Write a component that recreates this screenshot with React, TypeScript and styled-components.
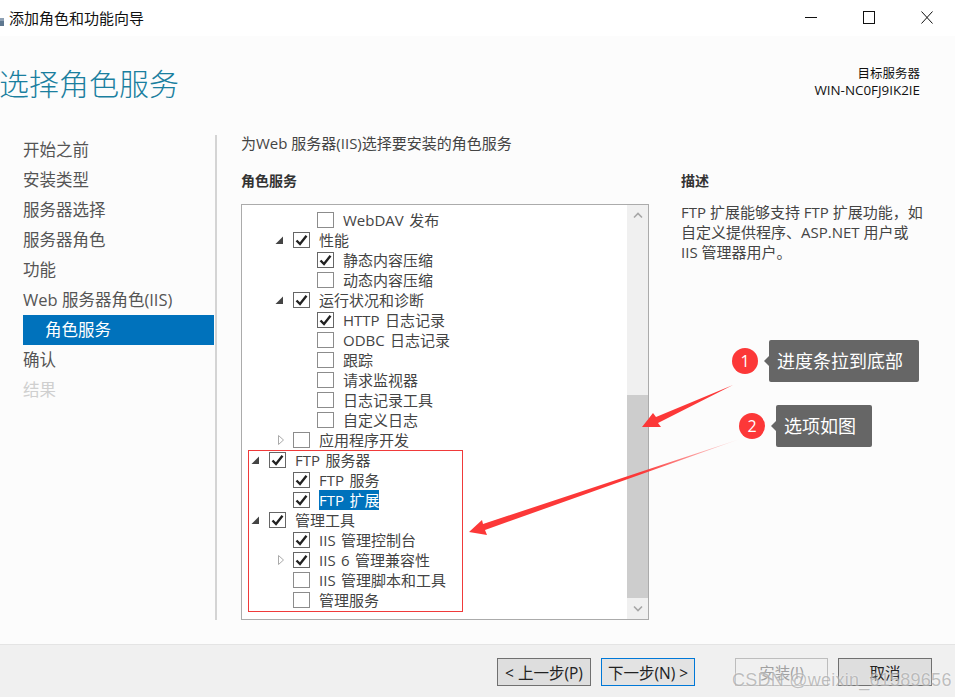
import React, { FC } from 'react'
import styled, { createGlobalStyle } from 'styled-components'

const GlobalStyle = createGlobalStyle`
    html, body {
        margin: 0;
        padding: 0;
        background: #fcfcfc;
    }
    * {
        box-sizing: border-box;
    }
`

const Window = styled.div`
    position: relative;
    width: 955px;
    height: 697px;
    overflow: hidden;
    display: flex;
    flex-direction: column;
    background: #fcfcfc;
    color: #333;
    font-family: 'Open Sans', 'Noto Sans CJK SC', sans-serif;
`

const TitleBar = styled.div`
    height: 36px;
    flex: none;
    background: #fff;
    display: flex;
    align-items: center;
    justify-content: space-between;
    padding: 0 22px 2px 0;
`

const TitleLeft = styled.div`
    display: flex;
    align-items: center;
    gap: 5px;
    font-size: 15px;
    color: #111;
`

const WindowButtons = styled.div`
    display: flex;
    align-items: center;
    gap: 46px;
    color: #111;
`

const Header = styled.div`
    height: 98px;
    flex: none;
    display: flex;
    justify-content: space-between;
    padding: 30px 35px 0 0;
`

const PageTitle = styled.h1`
    margin: 0 0 0 -1px;
    font-size: 30px;
    line-height: 36px;
    font-weight: 300;
    color: #1a7f9f;
`

const TargetServer = styled.div`
    text-align: right;
    font-size: 12.5px;
    line-height: 16px;
    color: #111;
`

const ServerName = styled.div`
    font-size: 13.4px;
`

const Main = styled.div`
    flex: 1;
    display: flex;
    min-height: 0;
`

const Sidebar = styled.nav`
    width: 217px;
    height: 485px;
    flex: none;
    margin-top: 1px;
    border-right: 2px solid #d4d4d4;
    padding-left: 23px;
`

const NavItem = styled.div<{ $state?: 'active' | 'disabled' }>`
    height: 30px;
    width: 191px;
    display: flex;
    align-items: center;
    padding-bottom: 2px;
    font-size: 16.5px;
    padding-left: ${p => (p.$state === 'active' ? '22px' : '0')};
    background: ${p => (p.$state === 'active' ? '#0072bc' : 'transparent')};
    color: ${p => (p.$state === 'active' ? '#fff' : p.$state === 'disabled' ? '#cfcfcf' : '#555')};
`

const Content = styled.section`
    width: 440px;
    flex: none;
    margin-left: 24px;
`

const Intro = styled.div`
    height: 18px;
    font-size: 15px;
    line-height: 18px;
    color: #444;
`

const SectionLabel = styled.div`
    margin-top: 20px;
    height: 18px;
    font-size: 14px;
    line-height: 18px;
    font-weight: 700;
    color: #333;
`

const ListBox = styled.div`
    position: relative;
    margin-top: 14px;
    width: 408px;
    height: 416px;
    display: flex;
    background: #fff;
    border: 1px solid #ababab;
`

const Tree = styled.div`
    flex: 1;
    padding-top: 5px;
`

const Row = styled.div<{ $level: number }>`
    height: 20px;
    display: flex;
    align-items: center;
    padding-left: ${p => 7 + p.$level * 24}px;
    font-size: 15px;
    word-spacing: 1.5px;
    color: #444;
`

const Expander = styled.span`
    width: 20px;
    padding-left: 1px;
    flex: none;
    display: flex;
    align-items: center;
`

const Box = styled.span<{ $strong: boolean }>`
    width: 17px;
    height: 16px;
    flex: none;
    display: flex;
    align-items: center;
    justify-content: center;
    border: 1px solid ${p => (p.$strong ? '#666' : '#8c8c8c')};
    background: #fff;
`

const RowLabel = styled.span<{ $selected?: boolean }>`
    margin-left: 9px;
    line-height: 20px;
    padding: 0;
    background: ${p => (p.$selected ? '#0072bc' : 'transparent')};
    color: ${p => (p.$selected ? '#fff' : '#444')};
`

const Scrollbar = styled.div`
    width: 21px;
    flex: none;
    display: flex;
    flex-direction: column;
    background: #f0f0f0;
`

const ScrollArrow = styled.div`
    height: 21px;
    flex: none;
    display: flex;
    align-items: center;
    justify-content: center;
`

const ScrollSpace = styled.div`
    height: 169px;
    flex: none;
`

const ScrollThumb = styled.div`
    flex: 1;
    background: #cdcdcd;
`

const Highlight = styled.div`
    position: absolute;
    left: 6px;
    top: 245px;
    width: 215px;
    height: 162px;
    border: 1px solid #f03a3a;
    pointer-events: none;
`

const Description = styled.aside`
    width: 250px;
    flex: none;
`

const DescriptionText = styled.p`
    margin: 12px 0 0;
    font-size: 15px;
    line-height: 20px;
    color: #444;
`

const Footer = styled.div`
    height: 53px;
    flex: none;
    background: #f0f0f0;
    border-top: 1px solid #e4e4e4;
    display: flex;
    align-items: flex-start;
    justify-content: flex-end;
    padding: 13px 23px 0 0;
`

const Button = styled.button<{ $kind?: 'primary' | 'disabled'; $gap?: number }>`
    width: ${p => (p.$kind === 'disabled' ? 93 : 94)}px;
    height: 28px;
    margin-left: ${p => p.$gap ?? 10}px;
    padding: 0;
    font-family: inherit;
    font-size: 15.5px;
    background: ${p => (p.$kind === 'disabled' ? '#f0f0f0' : p.$kind === 'primary' ? '#e3e3e3' : '#dedede')};
    border: 1px solid ${p => (p.$kind === 'primary' ? '#0078d7' : p.$kind === 'disabled' ? '#bdbdbd' : '#707070')};
    color: ${p => (p.$kind === 'disabled' ? '#a0a0a0' : '#222')};
`

const ArrowLayer = styled.svg`
    position: absolute;
    left: 0;
    top: 0;
    pointer-events: none;
`

const StepBadge = styled.div<{ $x: number; $y: number }>`
    position: absolute;
    left: ${p => p.$x - 13}px;
    top: ${p => p.$y - 13}px;
    width: 26px;
    height: 26px;
    border-radius: 50%;
    background: #fc3838;
    color: #fff;
    font-size: 16px;
    display: flex;
    align-items: center;
    justify-content: center;
`

const Callout = styled.div<{ $x: number; $y: number; $w: number }>`
    position: absolute;
    left: ${p => p.$x}px;
    top: ${p => p.$y}px;
    width: ${p => p.$w}px;
    height: 42px;
    border-radius: 2px;
    background: #666;
    color: #fff;
    font-size: 18px;
    line-height: 42px;
    padding-left: 8px;
    white-space: nowrap;

    &::before {
        content: '';
        position: absolute;
        left: -5px;
        top: 16px;
        border-style: solid;
        border-width: 5px 5px 5px 0;
        border-color: transparent #666 transparent transparent;
    }
`

const Watermark = styled.div`
    position: absolute;
    left: 732px;
    top: 669px;
    font-family: 'Liberation Sans', sans-serif;
    font-size: 18px;
    letter-spacing: 0.25px;
    line-height: 22px;
    white-space: nowrap;
    color: rgba(150, 150, 150, 0.6);
    text-shadow: 0 0 2px rgba(255, 255, 255, 0.9);
`

interface TreeRow {
    label: string
    level: number
    checked?: boolean
    expander?: 'open' | 'closed'
    selected?: boolean
}

const rows: TreeRow[] = [
    { label: 'WebDAV 发布', level: 2 },
    { label: '性能', level: 1, checked: true, expander: 'open' },
    { label: '静态内容压缩', level: 2, checked: true },
    { label: '动态内容压缩', level: 2 },
    { label: '运行状况和诊断', level: 1, checked: true, expander: 'open' },
    { label: 'HTTP 日志记录', level: 2, checked: true },
    { label: 'ODBC 日志记录', level: 2 },
    { label: '跟踪', level: 2 },
    { label: '请求监视器', level: 2 },
    { label: '日志记录工具', level: 2 },
    { label: '自定义日志', level: 2 },
    { label: '应用程序开发', level: 1, expander: 'closed' },
    { label: 'FTP 服务器', level: 0, checked: true, expander: 'open' },
    { label: 'FTP 服务', level: 1, checked: true },
    { label: 'FTP 扩展', level: 1, checked: true, selected: true },
    { label: '管理工具', level: 0, checked: true, expander: 'open' },
    { label: 'IIS 管理控制台', level: 1, checked: true },
    { label: 'IIS 6 管理兼容性', level: 1, checked: true, expander: 'closed' },
    { label: 'IIS 管理脚本和工具', level: 1 },
    { label: '管理服务', level: 1 },
]

const navItems: { label: string; state?: 'active' | 'disabled' }[] = [
    { label: '开始之前' },
    { label: '安装类型' },
    { label: '服务器选择' },
    { label: '服务器角色' },
    { label: '功能' },
    { label: 'Web 服务器角色(IIS)' },
    { label: '角色服务', state: 'active' },
    { label: '确认' },
    { label: '结果', state: 'disabled' },
]

const ExpanderIcon: FC<{ kind: 'open' | 'closed' }> = ({ kind }) =>
    kind === 'open' ? (
        <svg width="10" height="10" viewBox="0 0 10 10">
            <path d="M9 1.5V9H1.5z" fill="#444" />
        </svg>
    ) : (
        <svg width="10" height="12" viewBox="0 0 10 12" style={{ marginLeft: 3 }}>
            <path d="M1.5 1.5L6.5 6L1.5 10.5z" fill="#fff" stroke="#aaa" />
        </svg>
    )

const CheckMark = () => (
    <svg width="13" height="12" viewBox="0 0 13 12">
        <path d="M1.5 6.5L5 10L11.5 1.8" fill="none" stroke="#222" strokeWidth="2.4" />
    </svg>
)

const TreeItem: FC<{ row: TreeRow }> = ({ row }) => (
    <Row $level={row.level}>
        <Expander>{row.expander && <ExpanderIcon kind={row.expander} />}</Expander>
        <Box $strong={row.level === 0 || !!row.checked}>{row.checked && <CheckMark />}</Box>
        <RowLabel $selected={row.selected}>{row.label}</RowLabel>
    </Row>
)

const Chevron: FC<{ up?: boolean }> = ({ up }) => (
    <svg width="10" height="7" viewBox="0 0 10 7">
        <path d={up ? 'M1 5.5L5 1.5L9 5.5' : 'M1 1.5L5 5.5L9 1.5'} fill="none" stroke="#a6a6a6" strokeWidth="1.6" />
    </svg>
)

const AppIcon = () => (
    <svg width="4" height="8" viewBox="0 0 4 8" style={{ marginTop: 9 }}>
        <rect width="4" height="3" fill="#8da0b4" />
        <rect y="3" width="4" height="5" fill="#5f7890" />
    </svg>
)

const Arrows = () => (
    <ArrowLayer width="955" height="697" viewBox="0 0 955 697">
        <defs>
            <linearGradient id="fade" gradientUnits="userSpaceOnUse" x1="740" y1="439" x2="640" y2="472">
                <stop offset="0" stopColor="#fc3838" stopOpacity="0.1" />
                <stop offset="1" stopColor="#fc3838" />
            </linearGradient>
        </defs>
        <path d="M733 385L656 417L653 413L642 427L661 427L658 423z" fill="#fc3838" />
        <path d="M740 439L483 524L482 520L469 532L487 535L485 530z" fill="url(#fade)" />
    </ArrowLayer>
)

export default function App() {
    return (
        <Window>
            <GlobalStyle />
            <TitleBar>
                <TitleLeft>
                    <AppIcon />
                    添加角色和功能向导
                </TitleLeft>
                <WindowButtons>
                    <svg width="12" height="13" viewBox="0 0 12 13">
                        <path d="M0 6.5H12" stroke="currentColor" />
                    </svg>
                    <svg width="12" height="13" viewBox="0 0 12 13">
                        <rect x="0.5" y="0.5" width="11" height="12" fill="none" stroke="currentColor" />
                    </svg>
                    <svg width="12" height="13" viewBox="0 0 12 13">
                        <path d="M0.5 0.5L11.5 12.5M11.5 0.5L0.5 12.5" stroke="currentColor" />
                    </svg>
                </WindowButtons>
            </TitleBar>
            <Header>
                <PageTitle>选择角色服务</PageTitle>
                <TargetServer>
                    目标服务器
                    <ServerName>WIN-NC0FJ9IK2IE</ServerName>
                </TargetServer>
            </Header>
            <Main>
                <Sidebar>
                    {navItems.map(item => (
                        <NavItem key={item.label} $state={item.state}>
                            {item.label}
                        </NavItem>
                    ))}
                </Sidebar>
                <Content>
                    <Intro>为Web 服务器(IIS)选择要安装的角色服务</Intro>
                    <SectionLabel>角色服务</SectionLabel>
                    <ListBox>
                        <Tree>
                            {rows.map(row => (
                                <TreeItem key={row.label} row={row} />
                            ))}
                        </Tree>
                        <Scrollbar>
                            <ScrollArrow>
                                <Chevron up />
                            </ScrollArrow>
                            <ScrollSpace />
                            <ScrollThumb />
                            <ScrollArrow>
                                <Chevron />
                            </ScrollArrow>
                        </Scrollbar>
                        <Highlight />
                    </ListBox>
                </Content>
                <Description>
                    <Intro />
                    <SectionLabel>描述</SectionLabel>
                    <DescriptionText>
                        FTP 扩展能够支持 FTP 扩展功能，如
                        <br />
                        自定义提供程序、ASP.NET 用户或
                        <br />
                        IIS 管理器用户。
                    </DescriptionText>
                </Description>
            </Main>
            <Footer>
                <Button>&lt; 上一步(P)</Button>
                <Button $kind="primary">下一步(N) &gt;</Button>
                <Button $kind="disabled" $gap={40}>
                    安装(I)
                </Button>
                <Button>取消</Button>
            </Footer>
            <Arrows />
            <StepBadge $x={745} $y={361}>1</StepBadge>
            <Callout $x={769} $y={340} $w={150}>进度条拉到底部</Callout>
            <StepBadge $x={752} $y={426}>2</StepBadge>
            <Callout $x={776} $y={405} $w={96}>选项如图</Callout>
            <Watermark>CSDN @weixin_61589656</Watermark>
        </Window>
    )
}
